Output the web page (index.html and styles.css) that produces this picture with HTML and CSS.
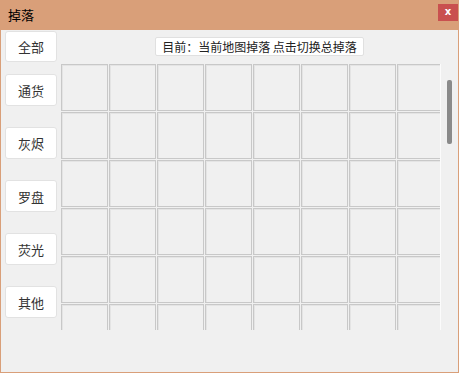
FILE: index.html
```html
<!DOCTYPE html>
<html>
<head>
<meta charset="utf-8">
<link rel="stylesheet" href="styles.css">
</head>
<body>
<div class="window">
  <div class="titlebar">
    <span class="title">掉落</span>
    <span class="close">x</span>
  </div>
  <div class="content">
    <div class="sidebar">
      <div class="btn first">全部</div>
      <div class="btn">通货</div>
      <div class="btn">灰烬</div>
      <div class="btn">罗盘</div>
      <div class="btn">荧光</div>
      <div class="btn">其他</div>
    </div>
    <div class="main">
      <div class="label-row"><div class="label">目前：当前地图掉落 点击切换总掉落</div></div>
      <div class="grid-row">
        <div class="viewport">
          <div class="grid">
            <div class="cell"></div><div class="cell"></div><div class="cell"></div><div class="cell"></div><div class="cell"></div><div class="cell"></div><div class="cell"></div><div class="cell"></div>
            <div class="cell"></div><div class="cell"></div><div class="cell"></div><div class="cell"></div><div class="cell"></div><div class="cell"></div><div class="cell"></div><div class="cell"></div>
            <div class="cell"></div><div class="cell"></div><div class="cell"></div><div class="cell"></div><div class="cell"></div><div class="cell"></div><div class="cell"></div><div class="cell"></div>
            <div class="cell"></div><div class="cell"></div><div class="cell"></div><div class="cell"></div><div class="cell"></div><div class="cell"></div><div class="cell"></div><div class="cell"></div>
            <div class="cell"></div><div class="cell"></div><div class="cell"></div><div class="cell"></div><div class="cell"></div><div class="cell"></div><div class="cell"></div><div class="cell"></div>
            <div class="cell"></div><div class="cell"></div><div class="cell"></div><div class="cell"></div><div class="cell"></div><div class="cell"></div><div class="cell"></div><div class="cell"></div>
          </div>
        </div>
        <div class="track"><div class="thumb"></div></div>
      </div>
    </div>
  </div>
</div>
</body>
</html>
```
FILE: styles.css
```css
* { box-sizing: border-box; }
html, body { margin: 0; padding: 0; background: #f0f0f0; }
body {
  font-family: "Noto Sans CJK SC", "Noto Sans", sans-serif;
  color: #222;
}
.window {
  width: 459px;
  height: 373px;
  border: 1px solid #d99f79;
  border-top: none;
  background: #f0f0f0;
  display: flex;
  flex-direction: column;
}
.titlebar {
  height: 30px;
  background: #d99f79;
  display: flex;
  align-items: center;
  justify-content: space-between;
  padding-left: 8px;
  margin: 0 -1px;
}
.title {
  font-size: 13px;
  color: #000;
  line-height: 1;
  margin-top: -1px;
}
.close {
  width: 20px;
  height: 17px;
  background: #c9504f;
  color: #fff;
  font-family: "DejaVu Sans", sans-serif;
  font-weight: bold;
  font-size: 10px;
  line-height: 15px;
  text-align: center;
  margin-top: -5px;
  margin-right: 1px;
}
.content {
  flex: 1;
  display: flex;
  min-height: 0;
}
.sidebar {
  width: 60px;
  padding-left: 4px;
  padding-top: 1px;
  display: flex;
  flex-direction: column;
}
.btn {
  width: 52px;
  height: 32px;
  background: #fff;
  border: 1px solid #e2e2e2;
  border-radius: 3px;
  font-size: 13px;
  color: #333;
  display: flex;
  align-items: center;
  justify-content: center;
  margin-top: 21px;
}
.btn.first {
  height: 31px;
  margin-top: 0;
}
.btn:nth-child(2) { margin-top: 12px; }
.main {
  flex: 1;
  display: flex;
  flex-direction: column;
}
.label-row {
  display: flex;
  justify-content: center;
  padding-top: 7px;
}
.label {
  height: 19px;
  background: #fff;
  border: 1px solid #e0e0e0;
  border-radius: 2px;
  font-size: 12px;
  line-height: 17px;
  padding: 0 6px;
  color: #222;
  white-space: nowrap;
}
.grid-row {
  display: flex;
  margin-top: 8px;
}
.viewport {
  width: 380px;
  height: 266px;
  overflow: hidden;
  border-right: 1px solid #fbfbfb;
}
.grid {
  display: grid;
  grid-template-columns: repeat(8, 47px);
  grid-auto-rows: 47px;
  gap: 1px;
  width: 383px;
}
.cell {
  border: 1px solid #c8c8c8;
  box-shadow: inset 1px 1px 0 #e4e4e4;
  background: #f0f0f0;
}
.track {
  flex: 1;
  padding-left: 6px;
  padding-top: 16px;
}
.thumb {
  width: 5px;
  height: 64px;
  background: #8a8a8a;
  border-radius: 2px;
}
```
